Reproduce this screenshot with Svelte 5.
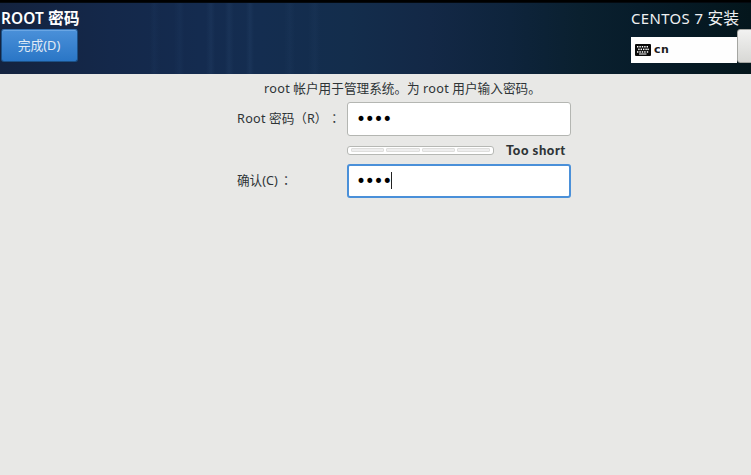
<script>
  let password = $state('••••');
  let confirmation = $state('••••');
  const levels = [0, 1, 2, 3];
  const keyRows = [
    { y: 2, keys: [2, 4.4, 6.8, 9.2, 11.6] },
    { y: 4.6, keys: [3.2, 5.6, 8, 10.4, 12.4] },
    { y: 7.2, keys: [2, 4.4, 6.8, 9.2, 11.8] }
  ];
</script>

<div class="screen">
  <header>
    <div class="left">
      <h1><span class="title-latin">ROOT</span> 密码</h1>
      <button class="done">完成(D)</button>
    </div>
    <div class="right">
      <div class="product"><span>CENTOS 7</span> 安装</div>
      <div class="tools">
        <div class="keyboard">
          <svg width="16" height="12" viewBox="0 0 16 12" aria-hidden="true">
            <rect width="16" height="12" rx="1" fill="#090909" />
            {#each keyRows as row}
              {#each row.keys as x}
                <rect {x} y={row.y} width="1.4" height="1.5" fill="#fff" />
              {/each}
            {/each}
            <path d="M4 10h7.5" stroke="#fff" stroke-width="1" />
          </svg>
          <b>cn</b>
        </div>
        <button class="help" aria-label="help"></button>
      </div>
    </div>
  </header>

  <main>
    <p class="intro"><span class="w1">root</span> 帐户用于管理系统。为 <span class="w1">root</span> 用户输入密码。</p>
    <div class="row">
      <span class="label"><span class="w1">Root</span> 密码（R）<span class="colon gap">：</span></span>
      <div class="entry"><span class="dots">{password}</span></div>
    </div>
    <div class="strength">
      <div class="meter">
        {#each levels as level (level)}<i></i>{/each}
      </div>
      <b>Too short</b>
    </div>
    <div class="row">
      <span class="label confirm">确认(C)<span class="colon">：</span></span>
      <div class="entry focus"><span class="dots">{confirmation}</span><span class="caret"></span></div>
    </div>
  </main>
</div>

<style>
  .screen {
    width: 751px;
    height: 475px;
    overflow: hidden;
    background: #e8e8e6;
    color: #2e3436;
    font-family: "Noto Sans", "Noto Sans CJK SC", sans-serif;
    font-size: 12.5px;
    white-space: nowrap;
  }
  header {
    box-sizing: border-box;
    height: 74px;
    border-top: 2px solid #000;
    display: flex;
    justify-content: space-between;
    background:
      linear-gradient(90deg, #284a7400 150px, #284a7420 154px, #284a7400 160px, #284a7400 174px, #284a7424 180px, #284a7400 184px, #284a7400 206px, #30507830 211px, #30507800 215px, #30507800 225px, #30507830 229px, #30507800 234px, #30507800 246px, #30507834 250px, #30507800 254px, #30507800 284px, #3050781c 290px, #30507800 295px, #30507800 308px, #3050781c 315px, #30507800 320px),
      linear-gradient(90deg, #14233f 0, #14284a 110px, #142b4f 200px, #142d50 260px, #132d4c 350px, #132846 430px, #0e243c 510px, #0a202f 580px, #071c2a 640px, #04161c 751px);
    box-shadow: inset 0 1px #04090f;
  }
  h1 {
    margin: 6px 0 0 1px;
    font-size: 15.8px;
    line-height: 20px;
    height: 21px;
    font-weight: 700;
    color: #fff;
  }
  .title-latin { font-weight: 600; font-size: 15.4px; letter-spacing: 0.1px; }
  .done {
    display: block;
    box-sizing: border-box;
    width: 77px;
    height: 33px;
    margin-left: 1px;
    padding: 0 1px 3px 0;
    border: 1px solid #1c5187;
    border-top-color: #3673b3;
    border-radius: 3px;
    background: linear-gradient(#4a90d9, #2a76c6);
    box-shadow: inset 0 1px #6aa6e4;
    color: #e0eaf5;
    font: 12.8px "Noto Sans", "Noto Sans CJK SC", sans-serif;
  }
  .right { width: 120px; color: #eef0f2; }
  .product { margin-top: 6px; height: 21px; line-height: 20px; font-size: 15.8px; }
  .product span { font-size: 14.9px; letter-spacing: 0.4px; }
  .tools { display: flex; }
  .keyboard {
    box-sizing: border-box;
    flex: none;
    width: 106px;
    height: 26px;
    margin-top: 8px;
    padding: 0 0 1px 4px;
    display: flex;
    align-items: center;
    gap: 3px;
    background: #fefefe;
    color: #1c1c1c;
  }
  .keyboard b { font: bold 11px/20px "DejaVu Sans", sans-serif; letter-spacing: 0.5px; }
  .help {
    box-sizing: border-box;
    flex: 0 0 34px;
    height: 34px;
    border: 1px solid #a5a6a2;
    border-radius: 3px;
    background: linear-gradient(#f2f2f1, #d8d8d5);
  }
  main { width: 334px; margin-left: 237px; }
  .intro {
    margin: 0 0 0 27px;
    padding-top: 4px;
    height: 24px;
    line-height: 21px;
    font-size: 12.65px;
  }
  .w1 { letter-spacing: 0.3px; }
  .row { display: flex; align-items: center; height: 34px; }
  .label { width: 110px; flex: none; line-height: 20px; box-sizing: border-box; font-size: 12.6px; padding-bottom: 1px; }
  .colon { font-family: "Noto Sans CJK TC", sans-serif; margin-left: 2px; }
  .gap { margin-left: 7px; }
  .entry {
    box-sizing: border-box;
    width: 224px;
    flex: none;
    height: 34px;
    padding: 0 0 1px 8px;
    display: flex;
    align-items: center;
    border: 1px solid #b4b6b2;
    border-radius: 3px;
    background: #fff;
    color: #000;
  }
  .focus { border: 2px solid #4a90d9; padding-left: 7px; }
  .dots { font: 17px/20px "DejaVu Sans", sans-serif; letter-spacing: -1.3px; margin-top: 1px; }
  .caret { width: 1px; height: 17px; background: #222; }
  .strength { height: 28px; margin-left: 110px; display: flex; align-items: center; gap: 12px; }
  .meter {
    box-sizing: border-box;
    width: 147px;
    height: 9px;
    padding: 1px 3px;
    display: flex;
    gap: 2px;
    border: 1px solid #b6b8b4;
    border-radius: 3px;
    background: #fff;
  }
  .meter i { flex: 1; box-sizing: border-box; border: 1px solid #dededc; background: #eee; height: 4px; margin-top: 0.5px; border-radius: 1px; }
  .strength b { font: 900 13px/20px Lato, sans-serif; letter-spacing: 0.55px; }
</style>
